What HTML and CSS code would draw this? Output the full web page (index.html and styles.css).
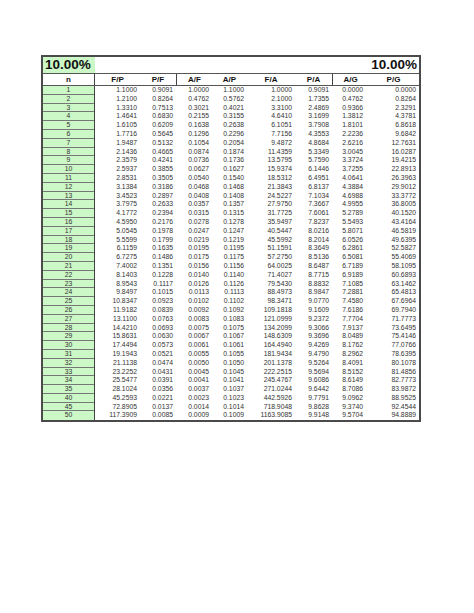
FILE: index.html
```html
<!DOCTYPE html>
<html>
<head>
<meta charset="utf-8">
<link rel="stylesheet" href="styles.css">
</head>
<body>
<div class="sheet">
  <div class="row title-row">
    <div class="title-left">10.00%</div>
    <div class="title-right">10.00%</div>
  </div>
  <div class="row head-row">
    <div class="h n">n</div><div class="h">F/P</div><div class="h">P/F</div><div class="h sep">A/F</div><div class="h">A/P</div><div class="h">F/A</div><div class="h">P/A</div><div class="h sep">A/G</div><div class="h">P/G</div>
  </div>
  <div class="row d"><div class="n">1</div><div>1.1000</div><div>0.9091</div><div>1.0000</div><div>1.1000</div><div>1.0000</div><div>0.9091</div><div class="ag">0.0000</div><div>0.0000</div></div>
  <div class="row d"><div class="n">2</div><div>1.2100</div><div>0.8264</div><div>0.4762</div><div>0.5762</div><div>2.1000</div><div>1.7355</div><div class="ag">0.4762</div><div>0.8264</div></div>
  <div class="row d"><div class="n">3</div><div>1.3310</div><div>0.7513</div><div>0.3021</div><div>0.4021</div><div>3.3100</div><div>2.4869</div><div class="ag">0.9366</div><div>2.3291</div></div>
  <div class="row d"><div class="n">4</div><div>1.4641</div><div>0.6830</div><div>0.2155</div><div>0.3155</div><div>4.6410</div><div>3.1699</div><div class="ag">1.3812</div><div>4.3781</div></div>
  <div class="row d"><div class="n">5</div><div>1.6105</div><div>0.6209</div><div>0.1638</div><div>0.2638</div><div>6.1051</div><div>3.7908</div><div class="ag">1.8101</div><div>6.8618</div></div>
  <div class="row d"><div class="n">6</div><div>1.7716</div><div>0.5645</div><div>0.1296</div><div>0.2296</div><div>7.7156</div><div>4.3553</div><div class="ag">2.2236</div><div>9.6842</div></div>
  <div class="row d"><div class="n">7</div><div>1.9487</div><div>0.5132</div><div>0.1054</div><div>0.2054</div><div>9.4872</div><div>4.8684</div><div class="ag">2.6216</div><div>12.7631</div></div>
  <div class="row d"><div class="n">8</div><div>2.1436</div><div>0.4665</div><div>0.0874</div><div>0.1874</div><div>11.4359</div><div>5.3349</div><div class="ag">3.0045</div><div>16.0287</div></div>
  <div class="row d"><div class="n">9</div><div>2.3579</div><div>0.4241</div><div>0.0736</div><div>0.1736</div><div>13.5795</div><div>5.7590</div><div class="ag">3.3724</div><div>19.4215</div></div>
  <div class="row d"><div class="n">10</div><div>2.5937</div><div>0.3855</div><div>0.0627</div><div>0.1627</div><div>15.9374</div><div>6.1446</div><div class="ag">3.7255</div><div>22.8913</div></div>
  <div class="row d"><div class="n">11</div><div>2.8531</div><div>0.3505</div><div>0.0540</div><div>0.1540</div><div>18.5312</div><div>6.4951</div><div class="ag">4.0641</div><div>26.3963</div></div>
  <div class="row d"><div class="n">12</div><div>3.1384</div><div>0.3186</div><div>0.0468</div><div>0.1468</div><div>21.3843</div><div>6.8137</div><div class="ag">4.3884</div><div>29.9012</div></div>
  <div class="row d"><div class="n">13</div><div>3.4523</div><div>0.2897</div><div>0.0408</div><div>0.1408</div><div>24.5227</div><div>7.1034</div><div class="ag">4.6988</div><div>33.3772</div></div>
  <div class="row d"><div class="n">14</div><div>3.7975</div><div>0.2633</div><div>0.0357</div><div>0.1357</div><div>27.9750</div><div>7.3667</div><div class="ag">4.9955</div><div>36.8005</div></div>
  <div class="row d"><div class="n">15</div><div>4.1772</div><div>0.2394</div><div>0.0315</div><div>0.1315</div><div>31.7725</div><div>7.6061</div><div class="ag">5.2789</div><div>40.1520</div></div>
  <div class="row d"><div class="n">16</div><div>4.5950</div><div>0.2176</div><div>0.0278</div><div>0.1278</div><div>35.9497</div><div>7.8237</div><div class="ag">5.5493</div><div>43.4164</div></div>
  <div class="row d"><div class="n">17</div><div>5.0545</div><div>0.1978</div><div>0.0247</div><div>0.1247</div><div>40.5447</div><div>8.0216</div><div class="ag">5.8071</div><div>46.5819</div></div>
  <div class="row d"><div class="n">18</div><div>5.5599</div><div>0.1799</div><div>0.0219</div><div>0.1219</div><div>45.5992</div><div>8.2014</div><div class="ag">6.0526</div><div>49.6395</div></div>
  <div class="row d"><div class="n">19</div><div>6.1159</div><div>0.1635</div><div>0.0195</div><div>0.1195</div><div>51.1591</div><div>8.3649</div><div class="ag">6.2861</div><div>52.5827</div></div>
  <div class="row d"><div class="n">20</div><div>6.7275</div><div>0.1486</div><div>0.0175</div><div>0.1175</div><div>57.2750</div><div>8.5136</div><div class="ag">6.5081</div><div>55.4069</div></div>
  <div class="row d"><div class="n">21</div><div>7.4002</div><div>0.1351</div><div>0.0156</div><div>0.1156</div><div>64.0025</div><div>8.6487</div><div class="ag">6.7189</div><div>58.1095</div></div>
  <div class="row d"><div class="n">22</div><div>8.1403</div><div>0.1228</div><div>0.0140</div><div>0.1140</div><div>71.4027</div><div>8.7715</div><div class="ag">6.9189</div><div>60.6893</div></div>
  <div class="row d"><div class="n">23</div><div>8.9543</div><div>0.1117</div><div>0.0126</div><div>0.1126</div><div>79.5430</div><div>8.8832</div><div class="ag">7.1085</div><div>63.1462</div></div>
  <div class="row d"><div class="n">24</div><div>9.8497</div><div>0.1015</div><div>0.0113</div><div>0.1113</div><div>88.4973</div><div>8.9847</div><div class="ag">7.2881</div><div>65.4813</div></div>
  <div class="row d"><div class="n">25</div><div>10.8347</div><div>0.0923</div><div>0.0102</div><div>0.1102</div><div>98.3471</div><div>9.0770</div><div class="ag">7.4580</div><div>67.6964</div></div>
  <div class="row d"><div class="n">26</div><div>11.9182</div><div>0.0839</div><div>0.0092</div><div>0.1092</div><div>109.1818</div><div>9.1609</div><div class="ag">7.6186</div><div>69.7940</div></div>
  <div class="row d"><div class="n">27</div><div>13.1100</div><div>0.0763</div><div>0.0083</div><div>0.1083</div><div>121.0999</div><div>9.2372</div><div class="ag">7.7704</div><div>71.7773</div></div>
  <div class="row d"><div class="n">28</div><div>14.4210</div><div>0.0693</div><div>0.0075</div><div>0.1075</div><div>134.2099</div><div>9.3066</div><div class="ag">7.9137</div><div>73.6495</div></div>
  <div class="row d"><div class="n">29</div><div>15.8631</div><div>0.0630</div><div>0.0067</div><div>0.1067</div><div>148.6309</div><div>9.3696</div><div class="ag">8.0489</div><div>75.4146</div></div>
  <div class="row d"><div class="n">30</div><div>17.4494</div><div>0.0573</div><div>0.0061</div><div>0.1061</div><div>164.4940</div><div>9.4269</div><div class="ag">8.1762</div><div>77.0766</div></div>
  <div class="row d"><div class="n">31</div><div>19.1943</div><div>0.0521</div><div>0.0055</div><div>0.1055</div><div>181.9434</div><div>9.4790</div><div class="ag">8.2962</div><div>78.6395</div></div>
  <div class="row d"><div class="n">32</div><div>21.1138</div><div>0.0474</div><div>0.0050</div><div>0.1050</div><div>201.1378</div><div>9.5264</div><div class="ag">8.4091</div><div>80.1078</div></div>
  <div class="row d"><div class="n">33</div><div>23.2252</div><div>0.0431</div><div>0.0045</div><div>0.1045</div><div>222.2515</div><div>9.5694</div><div class="ag">8.5152</div><div>81.4856</div></div>
  <div class="row d"><div class="n">34</div><div>25.5477</div><div>0.0391</div><div>0.0041</div><div>0.1041</div><div>245.4767</div><div>9.6086</div><div class="ag">8.6149</div><div>82.7773</div></div>
  <div class="row d"><div class="n">35</div><div>28.1024</div><div>0.0356</div><div>0.0037</div><div>0.1037</div><div>271.0244</div><div>9.6442</div><div class="ag">8.7086</div><div>83.9872</div></div>
  <div class="row d"><div class="n">40</div><div>45.2593</div><div>0.0221</div><div>0.0023</div><div>0.1023</div><div>442.5926</div><div>9.7791</div><div class="ag">9.0962</div><div>88.9525</div></div>
  <div class="row d"><div class="n">45</div><div>72.8905</div><div>0.0137</div><div>0.0014</div><div>0.1014</div><div>718.9048</div><div>9.8628</div><div class="ag">9.3740</div><div>92.4544</div></div>
  <div class="row d last"><div class="n">50</div><div>117.3909</div><div>0.0085</div><div>0.0009</div><div>0.1009</div><div>1163.9085</div><div>9.9148</div><div class="ag">9.5704</div><div>94.8889</div></div>
</div>
</body>
</html>
```
FILE: styles.css
```css
html, body {
  margin: 0;
  padding: 0;
  background: #ffffff;
}
body {
  padding: 55px 0 0 41px;
  font-family: "Liberation Sans", Arial, sans-serif;
  color: #222;
}
.sheet {
  width: 376px;
  border: 2px solid #4a4a4a;
}
.row {
  display: grid;
  grid-template-columns: 52px 45px 36px 36px 35px 48px 37px 36px 51px;
}
.title-row {
  height: 16px;
  border-bottom: 1px solid #555;
}
.title-left {
  background: #ccf7c6;
  font-weight: bold;
  font-size: 13.5px;
  line-height: 16px;
  padding-left: 2px;
  color: #111;
}
.title-right {
  grid-column: 2 / 10;
  text-align: right;
  font-weight: bold;
  font-size: 13.5px;
  line-height: 16px;
  padding-right: 2px;
  color: #111;
}
.head-row {
  height: 11px;
  border-bottom: 1px solid #555;
}
.h {
  font-weight: bold;
  font-size: 8px;
  line-height: 11px;
  text-align: center;
  color: #111;
}
.h.n {
  border-right: 1px solid #444;
}
.h.sep {
  border-left: 1px solid #444;
}
.d {
  height: 8.8px;
  font-size: 6.8px;
  line-height: 8.8px;
  color: #333;
}
.d > div {
  text-align: right;
  padding-right: 3px;
  white-space: nowrap;
}
.d > div.ag {
  padding-right: 5px;
}
.d > div.n {
  text-align: center;
  padding-right: 0;
  background: #ccf7c6;
  border-right: 1px solid #444;
  box-shadow: inset 0 -1px 0 #777;
}
.d.last > div.n {
  box-shadow: none;
}
```
